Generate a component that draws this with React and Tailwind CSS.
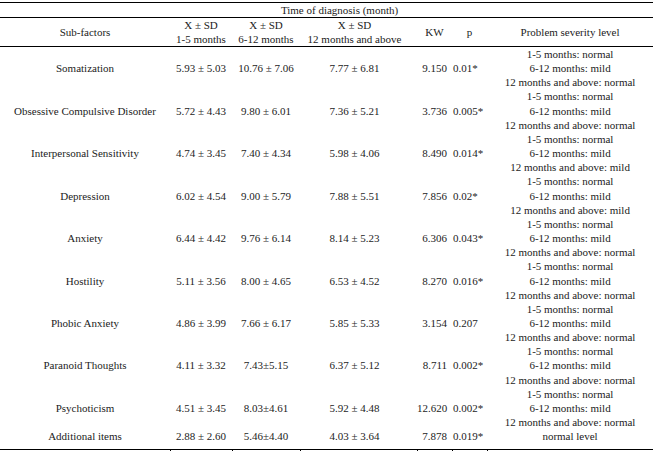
import React from 'react';

const rows = [
  { name: 'Somatization', a: '5.93 ± 5.03', b: '10.76 ± 7.06', c: '7.77 ± 6.81', kw: '9.150', p: '0.01*', last: 'normal' },
  { name: 'Obsessive Compulsive Disorder', a: '5.72 ± 4.43', b: '9.80 ± 6.01', c: '7.36 ± 5.21', kw: '3.736', p: '0.005*', last: 'normal' },
  { name: 'Interpersonal Sensitivity', a: '4.74 ± 3.45', b: '7.40 ± 4.34', c: '5.98 ± 4.06', kw: '8.490', p: '0.014*', last: 'mild' },
  { name: 'Depression', a: '6.02 ± 4.54', b: '9.00 ± 5.79', c: '7.88 ± 5.51', kw: '7.856', p: '0.02*', last: 'mild' },
  { name: 'Anxiety', a: '6.44 ± 4.42', b: '9.76 ± 6.14', c: '8.14 ± 5.23', kw: '6.306', p: '0.043*', last: 'normal' },
  { name: 'Hostility', a: '5.11 ± 3.56', b: '8.00 ± 4.65', c: '6.53 ± 4.52', kw: '8.270', p: '0.016*', last: 'normal' },
  { name: 'Phobic Anxiety', a: '4.86 ± 3.99', b: '7.66 ± 6.17', c: '5.85 ± 5.33', kw: '3.154', p: '0.207', last: 'normal' },
  { name: 'Paranoid Thoughts', a: '4.11 ± 3.32', b: '7.43±5.15', c: '6.37 ± 5.12', kw: '8.711', p: '0.002*', last: 'normal' },
  { name: 'Psychoticism', a: '4.51 ± 3.45', b: '8.03±4.61', c: '5.92 ± 4.48', kw: '12.620', p: '0.002*', last: 'normal' },
];

export default function App() {
  return (
    <div className="w-[653px] h-[451px] bg-white pt-[2px] text-[#1c1c1c] text-[11px] leading-[14px]" style={{ fontFamily: '"Liberation Serif", "DejaVu Serif", serif' }}>
      <table className="w-[653px] table-fixed border-collapse">
        <colgroup>
          <col className="w-[170px]" />
          <col className="w-[62px]" />
          <col className="w-[68px]" />
          <col className="w-[117px]" />
          <col className="w-[35px]" />
          <col className="w-[35px]" />
          <col className="w-[166px]" />
        </colgroup>
        <thead>
          <tr className="border-t border-black">
            <th colSpan={7} className="font-normal text-center pl-[26px] h-[15px] p-0 leading-[14px]">Time of diagnosis (month)</th>
          </tr>
          <tr className="border-t border-b border-black">
            <th className="font-normal p-0 h-[28px]">Sub-factors</th>
            <th className="font-normal p-0 whitespace-nowrap">X ± SD<br />1-5 months</th>
            <th className="font-normal p-0 whitespace-nowrap">X ± SD<br />6-12 months</th>
            <th className="font-normal p-0 pr-[8px] whitespace-nowrap">X ± SD<br />12 months and above</th>
            <th className="font-normal p-0">KW</th>
            <th className="font-normal p-0">p</th>
            <th className="font-normal p-0">Problem severity level</th>
          </tr>
        </thead>
        <tbody>
          {rows.map((r) => (
            <tr key={r.name} className="leading-[14.15px]">
              <td className="p-0 text-center whitespace-nowrap">{r.name}</td>
              <td className="p-0 text-center whitespace-nowrap">{r.a}</td>
              <td className="p-0 text-center whitespace-nowrap">{r.b}</td>
              <td className="p-0 pr-[8px] text-center whitespace-nowrap">{r.c}</td>
              <td className="p-0 pr-[5px] text-right whitespace-nowrap overflow-visible">{r.kw}</td>
              <td className="p-0 pl-[1px] text-left whitespace-nowrap">{r.p}</td>
              <td className="p-0 text-center whitespace-nowrap">
                <div>1-5 months: normal</div>
                <div>6-12 months: mild</div>
                <div>12 months and above: {r.last}</div>
              </td>
            </tr>
          ))}
          <tr className="leading-[14px] border-b border-black">
            <td className="p-0 pb-[6px] text-center">Additional items</td>
            <td className="p-0 pb-[6px] text-center whitespace-nowrap">2.88 ± 2.60</td>
            <td className="p-0 pb-[6px] text-center whitespace-nowrap">5.46±4.40</td>
            <td className="p-0 pb-[6px] pr-[8px] text-center whitespace-nowrap">4.03 ± 3.64</td>
            <td className="p-0 pb-[6px] pr-[5px] text-right whitespace-nowrap">7.878</td>
            <td className="p-0 pb-[6px] pl-[1px] text-left whitespace-nowrap">0.019*</td>
            <td className="p-0 pb-[6px] text-center">normal level</td>
          </tr>
          <tr className="h-[4px]">
            <td className="p-0" />
            <td className="p-0 border-l border-black" />
            <td className="p-0 border-l border-black" />
            <td className="p-0 border-l border-black" />
            <td className="p-0 border-l border-black" />
            <td className="p-0 border-l border-black" />
            <td className="p-0 border-l border-black" />
          </tr>
        </tbody>
      </table>
    </div>
  );
}
